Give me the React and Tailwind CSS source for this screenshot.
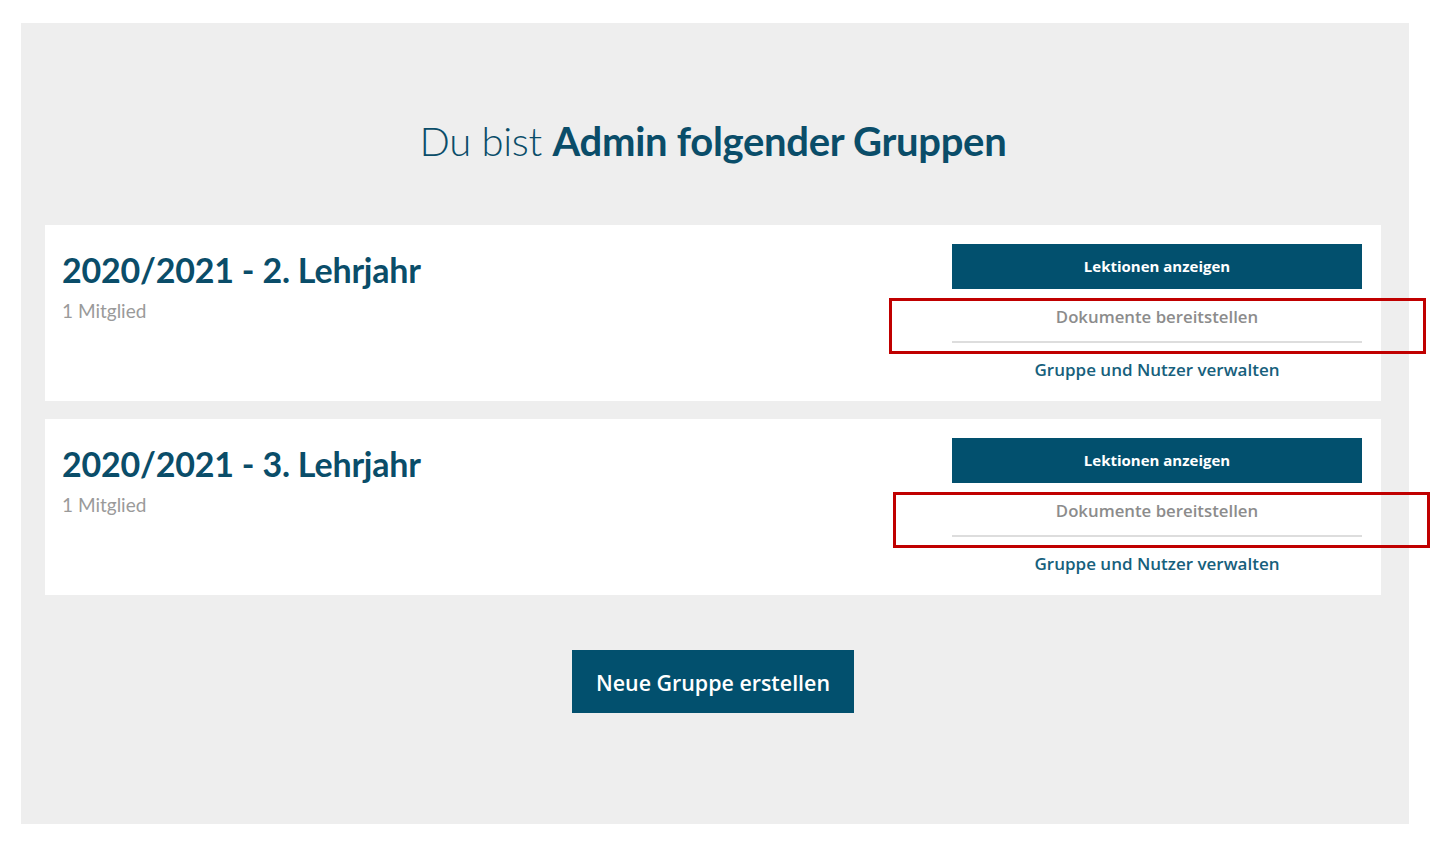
import React from 'react';

const groups = [
  { id: 1, name: '2020/2021 - 2. Lehrjahr', members: '1 Mitglied', boxLeft: 'left-[844px]' },
  { id: 2, name: '2020/2021 - 3. Lehrjahr', members: '1 Mitglied', boxLeft: 'left-[848px]' },
];

const GroupCard = ({ group }) => (
  <div className="relative flex h-[176px] bg-white pl-[17px] pr-[19px] pt-[19px]">
    <div className="flex-1 pt-[4px]">
      <h2 className="text-[34px] font-bold leading-[44px] tracking-[-0.2px] text-[#0a4d69]">{group.name}</h2>
      <p className="mt-[5px] text-[19px] leading-[28px] text-[#9a9a9a]">{group.members}</p>
    </div>
    <div className="flex w-[410px] flex-col font-['Open_Sans',sans-serif]">
      <button className="h-[45px] bg-[#02506e] text-[15px] font-bold text-white">Lektionen anzeigen</button>
      <div className="flex h-[54px] items-center justify-center border-b-2 border-[#dddddd] pt-[4px] text-[16.8px] font-semibold text-[#8c8c8c]">
        Dokumente bereitstellen
      </div>
      <a className="flex h-[54px] items-center justify-center text-[17px] font-semibold text-[#16607c]">
        Gruppe und Nutzer verwalten
      </a>
    </div>
    <div className={`absolute top-[73px] ${group.boxLeft} h-[56px] w-[537px] border-[3px] border-[#c00000]`} />
  </div>
);

export default function App() {
  return (
    <div className="min-h-[851px] bg-white pl-[21px] pt-[23px] font-['Lato',sans-serif]">
      <div className="flex h-[801px] w-[1388px] flex-col bg-[#eeeeee] pl-6 pr-7">
        <h1 className="mt-[90px] text-center text-[40px] leading-[56px] tracking-[-0.3px] text-[#0a4d69]">
          <span className="font-light">Du bist </span>
          <span className="font-bold">Admin folgender Gruppen</span>
        </h1>
        <div className="mt-[56px] flex flex-col gap-[18px]">
          {groups.map((g) => (
            <GroupCard key={g.id} group={g} />
          ))}
        </div>
        <div className="mt-[55px] flex justify-center">
          <button className="h-[63px] w-[282px] bg-[#02506e] pt-[3px] font-['Open_Sans',sans-serif] text-[21.4px] font-semibold text-white">
            Neue Gruppe erstellen
          </button>
        </div>
      </div>
    </div>
  );
}
